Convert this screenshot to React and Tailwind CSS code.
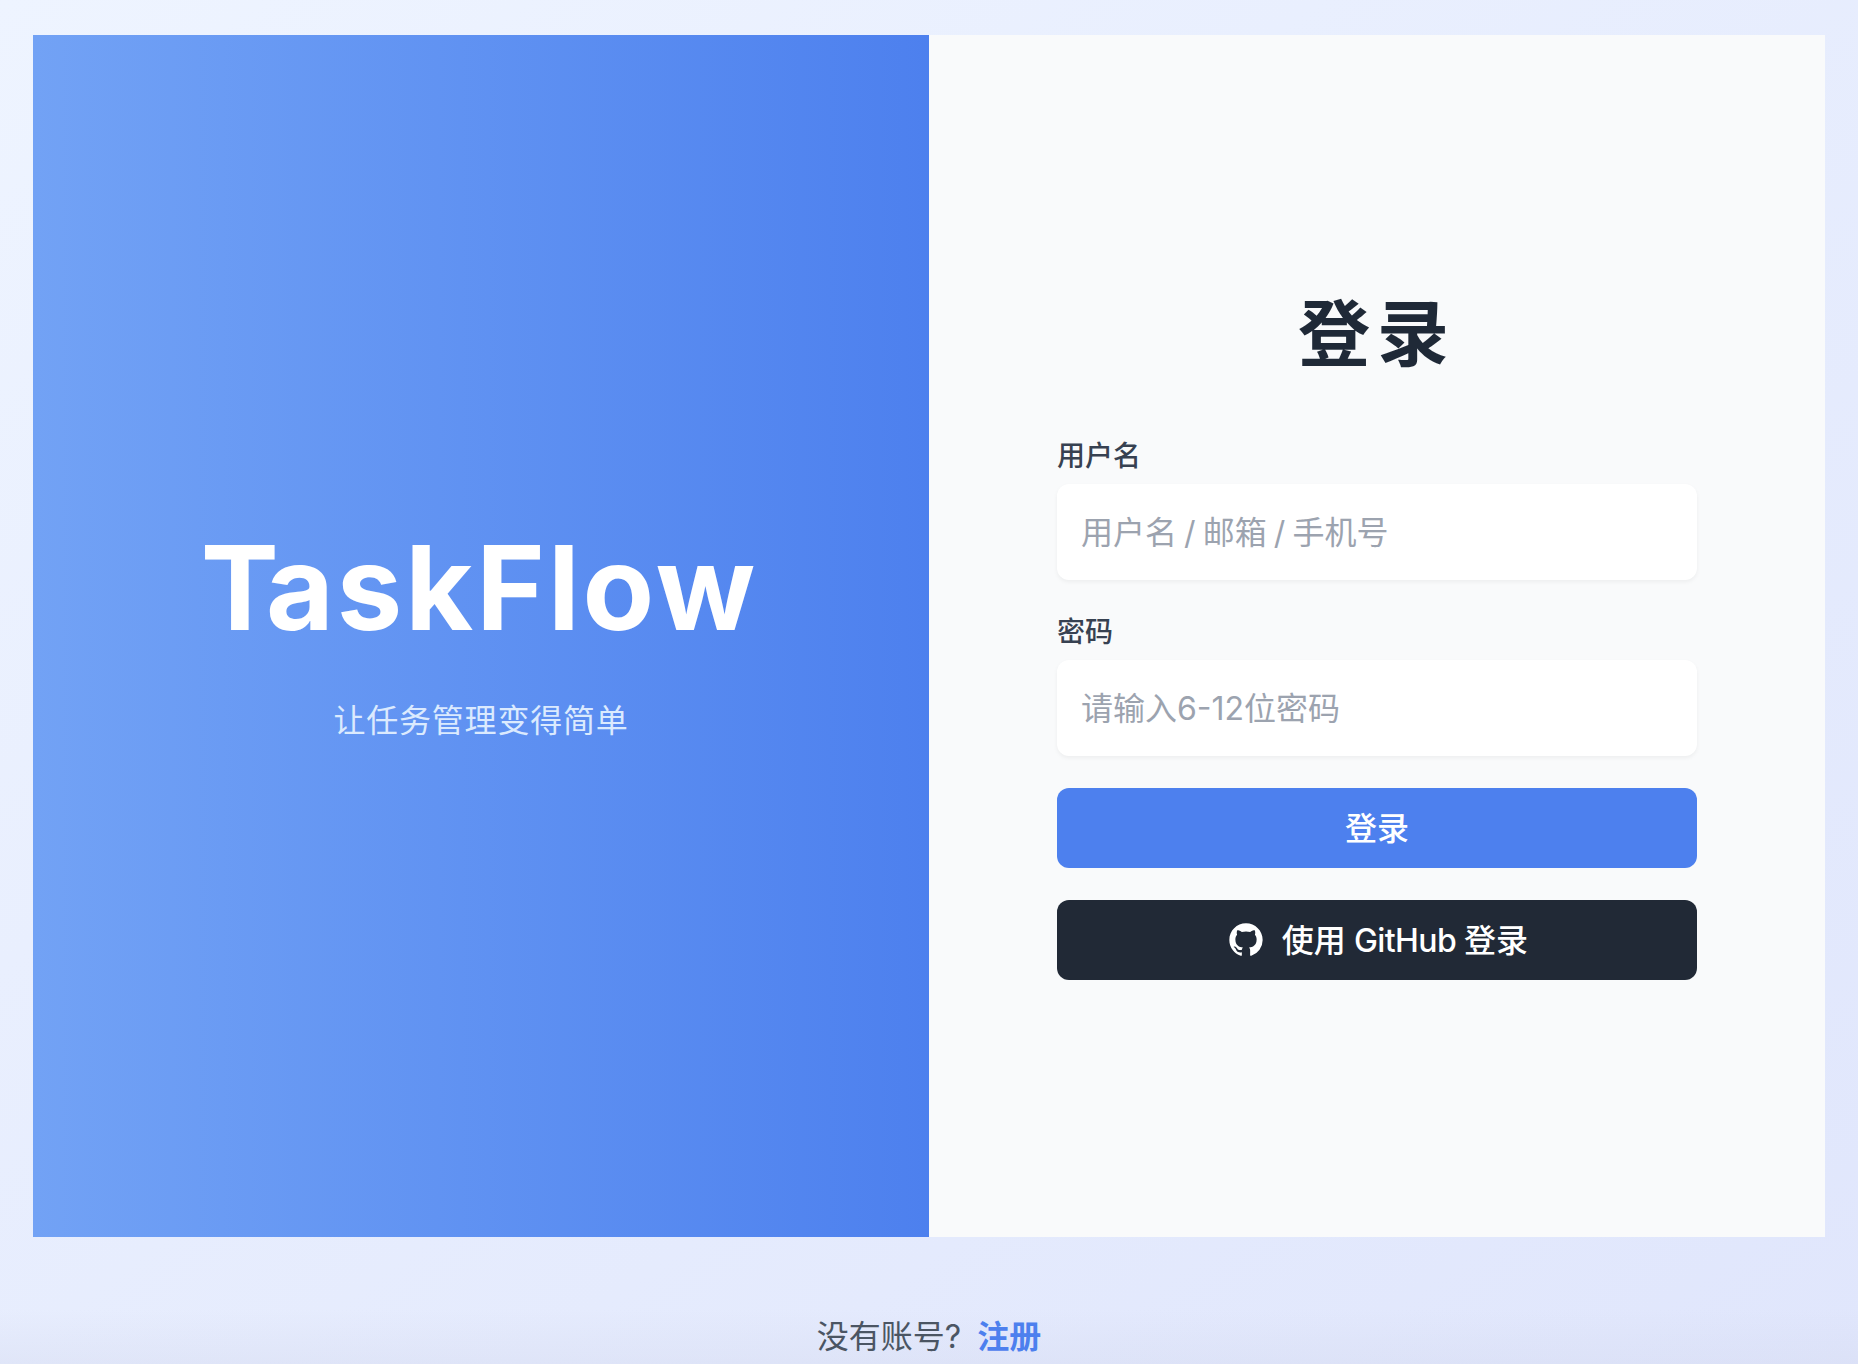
function GithubMark({ className }) {
  return (
    <svg viewBox="0 0 24 24" fill="currentColor" className={className} aria-hidden="true">
      <path
        fillRule="evenodd"
        clipRule="evenodd"
        d="M12 2C6.477 2 2 6.484 2 12.017c0 4.425 2.865 8.18 6.839 9.504.5.092.682-.217.682-.483 0-.237-.008-.868-.013-1.703-2.782.605-3.369-1.343-3.369-1.343-.454-1.158-1.11-1.466-1.11-1.466-.908-.62.069-.608.069-.608 1.003.07 1.531 1.032 1.531 1.032.892 1.53 2.341 1.088 2.91.832.092-.647.35-1.088.636-1.338-2.22-.253-4.555-1.113-4.555-4.951 0-1.093.39-1.988 1.029-2.688-.103-.253-.446-1.272.098-2.65 0 0 .84-.27 2.75 1.026A9.564 9.564 0 0112 6.844c.85.004 1.705.115 2.504.337 1.909-1.296 2.747-1.027 2.747-1.027.546 1.379.202 2.398.1 2.651.64.7 1.028 1.595 1.028 2.688 0 3.848-2.339 4.695-4.566 4.943.359.309.678.92.678 1.855 0 1.338-.012 2.419-.012 2.747 0 .268.18.58.688.482A10.019 10.019 0 0022 12.017C22 6.484 17.522 2 12 2z"
      />
    </svg>
  );
}

function Field({ label, placeholder, type }) {
  return (
    <label className="block">
      <span className="block h-[40px] text-[28px] leading-[40px] font-medium text-[#374151]">{label}</span>
      <input
        type={type}
        placeholder={placeholder}
        className="mt-[8px] block h-[96px] w-full rounded-[12px] bg-white px-[24px] text-[32px] [word-spacing:-1.9px] text-gray-700 shadow-[0_2px_4px_rgba(0,0,0,0.05)] outline-none placeholder:text-[#9ca3af]"
      />
    </label>
  );
}

export default function App() {
  return (
    <div className="h-[1364px] w-full overflow-hidden bg-linear-to-br from-[#eef4ff] to-[#e0e6fc] font-['Inter','Noto_Sans_CJK_SC',sans-serif]">
      <div className="h-full bg-linear-to-b from-transparent from-[96%] to-[#d3d8ee]/35 px-[33px] pt-[35px]">
        <main className="grid h-[1202px] grid-cols-2">
          <section className="flex flex-col items-center bg-linear-to-r from-[#72a2f5] to-[#4d80ee] pt-[493px] text-white">
            <h1 className="pr-[3px] text-[117px] leading-[120px] font-bold tracking-[3px]">
              <span className="tracking-[-13px]">T</span>askFlow
            </h1>
            <p className="mt-[45px] text-[32px] leading-[56px] tracking-[0.8px] text-[#dbeafe]">让任务管理变得简单</p>
          </section>
          <section className="bg-[#f9fafb] px-[128px] pt-[259px]">
            <h2 className="text-center text-[72px] leading-[80px] font-bold tracking-[7px] text-[#1f2937]">登录</h2>
            <form className="mt-[62px]">
              <Field label="用户名" placeholder="用户名 / 邮箱 / 手机号" type="text" />
              <div className="h-[32px]" />
              <Field label="密码" placeholder="请输入6-12位密码" type="password" />
              <button type="button" className="mt-[32px] block h-[80px] w-full rounded-[12px] bg-[#4d80ee] pt-[2px] text-[32px] font-medium text-white">登录</button>
              <button type="button" className="mt-[32px] flex h-[80px] w-full items-center justify-center gap-[16px] rounded-[12px] bg-[#212936] text-[32px] font-medium text-white">
                <GithubMark className="size-[40px]" />
                <span className="pt-[1px] [word-spacing:-0.5px]">使用 <span className="tracking-[-0.6px]">GitHub</span> 登录</span>
              </button>
            </form>
          </section>
        </main>
        <footer className="mt-[76px] flex justify-center gap-[16px] text-[32px] leading-[48px]">
          <span className="text-[#4b5563]">没有账号?</span>
          <a className="font-semibold text-[#4d80ee]">注册</a>
        </footer>
      </div>
    </div>
  );
}
